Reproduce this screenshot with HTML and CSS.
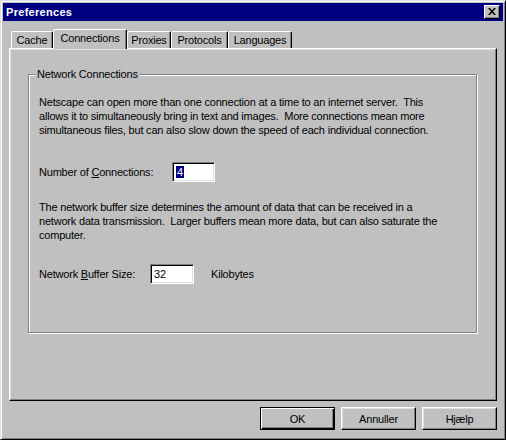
FILE: index.html
```html
<!DOCTYPE html>
<html lang="en">
<head>
    <meta charset="UTF-8">
    <title>Preferences</title>
    <link rel="stylesheet" href="styles.css">
</head>
<body>
    <div class="window">
        <div class="titlebar">
            <span class="title">Preferences</span>
            <span class="close">
                <svg width="8" height="7" viewBox="0 0 8 7">
                    <path d="M0 0h2l2 2.5L6 0h2L5 3.5 8 7H6L4 4.5 2 7H0l3-3.5z" fill="#000"/>
                </svg>
            </span>
        </div>

        <div class="tabs">
            <div class="tab tab-cache">Cache</div>
            <div class="tab tab-active">Connections</div>
            <div class="tab tab-proxies">Proxies</div>
            <div class="tab tab-protocols">Protocols</div>
            <div class="tab tab-languages">Languages</div>
        </div>

        <div class="panel">
            <div class="group">
                <span class="group-label">Network Connections</span>
                <p class="para para-first">
                    Netscape can open more than one connection at a time to an internet server.&nbsp; This<br>
                    allows it to simultaneously bring in text and images.&nbsp; More connections mean more<br>
                    simultaneous files, but can also slow down the speed of each individual connection.
                </p>
                <div class="field field-conn">
                    <label class="label-conn">Number of <u>C</u>onnections:</label>
                    <span class="input input-conn"><span class="selected">4</span></span>
                </div>
                <p class="para para-second">
                    The network buffer size determines the amount of data that can be received in a<br>
                    network data transmission.&nbsp; Larger buffers mean more data, but can also saturate the<br>
                    computer.
                </p>
                <div class="field field-buffer">
                    <label class="label-buffer">Network <u>B</u>uffer Size:</label>
                    <span class="input input-buffer">32</span>
                    <span class="unit">Kilobytes</span>
                </div>
            </div>
        </div>

        <div class="buttons">
            <button class="btn btn-default">OK</button>
            <button class="btn">Annuller</button>
            <button class="btn">Hjælp</button>
        </div>
    </div>
</body>
</html>
```

FILE: styles.css
```css
body {
    margin: 0;
    background: #c0c0c0;
    font-family: "Liberation Sans", Arial, sans-serif;
    font-size: 11px;
    letter-spacing: -0.2px;
    color: #000;
}

.window {
    width: 506px;
    height: 440px;
    box-sizing: border-box;
    padding: 2px;
    background: #c0c0c0;
    border: 1px solid;
    border-color: #dfdfdf #000 #000 #dfdfdf;
    box-shadow: inset 1px 1px #fff, inset -1px -1px #808080;
}

/* title bar */
.titlebar {
    height: 18px;
    background: #000080;
    color: #fff;
    display: flex;
    align-items: flex-start;
    justify-content: space-between;
}
.title {
    font-weight: bold;
    letter-spacing: 0.3px;
    line-height: 18px;
    padding-left: 3px;
}
.close {
    width: 16px;
    height: 14px;
    box-sizing: border-box;
    margin: 2px 3px 0 0;
    background: #c0c0c0;
    border: 1px solid;
    border-color: #fff #000 #000 #fff;
    box-shadow: inset -1px -1px #808080;
    display: flex;
    align-items: center;
    justify-content: center;
}
.close svg {
    display: block;
    margin: 0 1px 1px 0;
}

/* tabs */
.tabs {
    display: flex;
    align-items: flex-end;
    height: 19px;
    margin-top: 8px;
    padding-left: 8px;
}
.tab {
    height: 17px;
    box-sizing: border-box;
    border: 1px solid;
    border-bottom: none;
    border-color: #fff #000 transparent #fff;
    border-top-left-radius: 2px;
    border-top-right-radius: 2px;
    box-shadow: inset -1px 0 #808080;
    text-align: center;
    line-height: 16px;
}
.tab-cache { width: 42px; }
.tab-proxies { width: 44px; }
.tab-protocols { width: 57px; }
.tab-languages { width: 64px; }
.tab-active {
    position: relative;
    z-index: 1;
    width: 74px;
    height: 20px;
    margin-bottom: -1px;
    background: #c0c0c0;
    line-height: 17px;
}

/* panel */
.panel {
    width: 488px;
    height: 353px;
    box-sizing: border-box;
    margin-left: 6px;
    border: 1px solid;
    border-color: #fff #000 #000 #fff;
    box-shadow: inset -1px -1px #808080, inset 1px 1px #dfdfdf;
    padding-top: 25px;
}

.group {
    position: relative;
    width: 449px;
    height: 259px;
    box-sizing: border-box;
    margin-left: 18px;
    border: 1px solid #808080;
    box-shadow: inset 1px 1px #fff, 1px 1px #fff;
    padding: 20px 10px 0 10px;
}
.group-label {
    position: absolute;
    top: -7px;
    left: 6px;
    padding: 0 2px;
    line-height: 13px;
    background: #c0c0c0;
}

.para {
    margin: 0;
    line-height: 14px;
}
.para-second {
    margin-top: 18px;
}

.field {
    display: flex;
    align-items: center;
    height: 20px;
}
.field-conn {
    margin-top: 25px;
}
.field-buffer {
    margin-top: 22px;
}
.label-conn { width: 133px; }
.label-buffer { width: 111px; }

.input {
    height: 20px;
    box-sizing: border-box;
    background: #fff;
    border: 1px solid;
    border-color: #808080 #fff #fff #808080;
    box-shadow: inset 1px 1px #000, inset -1px -1px #dfdfdf;
    padding: 2px 0 0 3px;
    line-height: 15px;
}
.input-conn { width: 43px; }
.input-buffer { width: 44px; }
.selected {
    background: #000080;
    color: #fff;
    padding: 0 1px;
}
.unit {
    margin-left: 17px;
}

/* bottom buttons */
.buttons {
    display: flex;
    justify-content: flex-end;
    gap: 6px;
    margin-top: 6px;
    margin-right: 6px;
}
.btn {
    width: 75px;
    height: 23px;
    box-sizing: border-box;
    padding: 0;
    font: inherit;
    letter-spacing: inherit;
    color: #000;
    background: #c0c0c0;
    border: 1px solid;
    border-color: #fff #000 #000 #fff;
    box-shadow: inset -1px -1px #808080, inset 1px 1px #dfdfdf;
}
.btn-default {
    border-color: #000;
    box-shadow: inset 1px 1px #fff, inset -1px -1px #000, inset -2px -2px #808080;
}
```
